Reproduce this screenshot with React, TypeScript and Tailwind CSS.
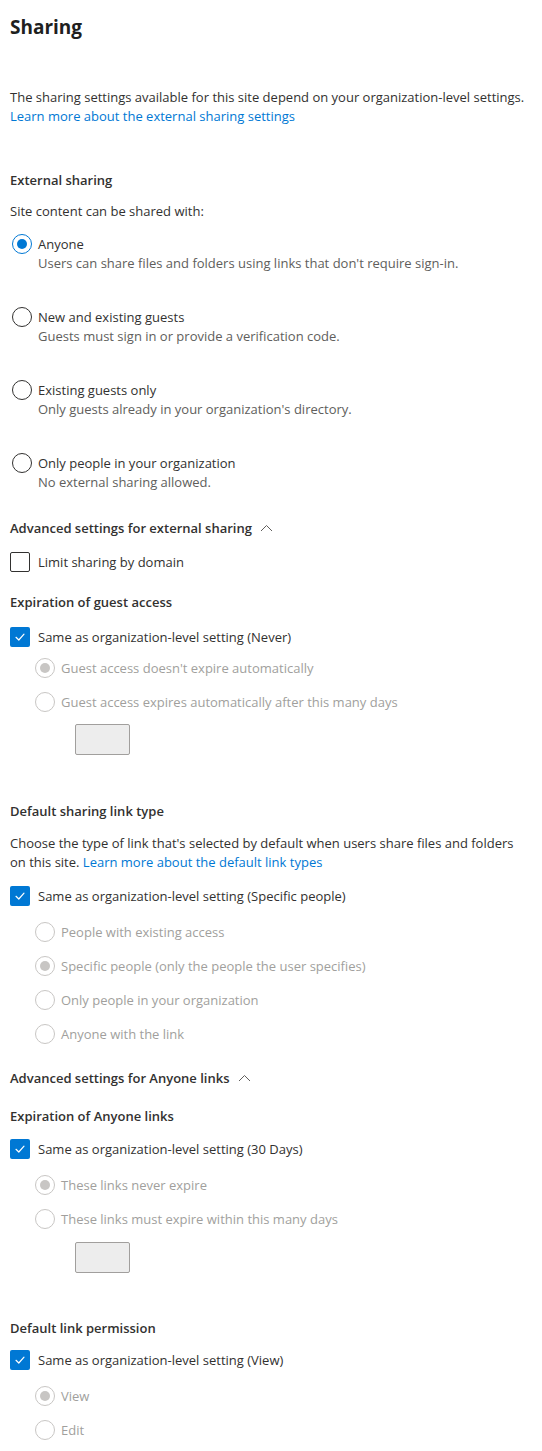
import React from "react";

const font = { fontFamily: '"Open Sans", "Noto Sans", sans-serif' };

function Radio({ state }: { state: "on" | "off" | "don" | "doff" }) {
  if (state === "on")
    return (
      <span className="w-[20px] h-[20px] shrink-0 rounded-full border border-[#0078d4] flex items-center justify-center">
        <span className="w-[10px] h-[10px] rounded-full bg-[#0078d4]" />
      </span>
    );
  if (state === "off")
    return <span className="w-[20px] h-[20px] shrink-0 rounded-full border border-[#323130]" />;
  if (state === "don")
    return (
      <span className="w-[20px] h-[20px] shrink-0 rounded-full border border-[#c8c6c4] flex items-center justify-center">
        <span className="w-[10px] h-[10px] rounded-full bg-[#c8c6c4]" />
      </span>
    );
  return <span className="w-[20px] h-[20px] shrink-0 rounded-full border border-[#c8c6c4]" />;
}

function Check({ checked }: { checked: boolean }) {
  if (checked)
    return (
      <span className="w-[20px] h-[20px] shrink-0 rounded-[2px] bg-[#0078d4] flex items-center justify-center">
        <svg width="12" height="12" viewBox="0 0 12 12" fill="none">
          <path d="M2 6.3 L4.8 9 L10 3.2" stroke="white" strokeWidth="1.2" strokeLinecap="round" strokeLinejoin="round" />
        </svg>
      </span>
    );
  return <span className="w-[20px] h-[20px] shrink-0 rounded-[2px] border border-[#323130]" />;
}

function Chevron() {
  return (
    <svg width="13" height="8" viewBox="0 0 13 8" fill="none" className="ml-[8px]">
      <path d="M1 7 L6.5 1.5 L12 7" stroke="#605e5c" strokeWidth="1" />
    </svg>
  );
}

function MainRadio({ state, label, desc, className }: { state: "on" | "off"; label: string; desc: string; className: string }) {
  return (
    <div className={`flex flex-col ${className}`}>
      <div className="flex items-center h-[20px] pl-[12px]">
        <Radio state={state} />
        <span className="ml-[6px] leading-[20px] text-[#323130]">{label}</span>
      </div>
      <div className="pl-[38px] leading-[19px] text-[#605e5c]">{desc}</div>
    </div>
  );
}

function CheckRow({ checked, label, className }: { checked: boolean; label: string; className: string }) {
  return (
    <div className={`flex items-center h-[20px] pl-[10px] ${className}`}>
      <Check checked={checked} />
      <span className="ml-[8px] leading-[20px] text-[#323130]">{label}</span>
    </div>
  );
}

function SubRadio({ on, label, className }: { on: boolean; label: string; className: string }) {
  return (
    <div className={`flex items-center h-[20px] pl-[35px] ${className}`}>
      <Radio state={on ? "don" : "doff"} />
      <span className="ml-[6px] leading-[20px] text-[#a19f9d]">{label}</span>
    </div>
  );
}

function DisabledInput({ className }: { className: string }) {
  return <div className={`ml-[75px] w-[55px] h-[31px] rounded-[2px] border border-[#a19f9d] bg-[#ededed] ${className}`} />;
}

export default function App() {
  return (
    <div style={font} className="w-[542px] h-[1451px] bg-white text-[13px] text-[#323130] flex flex-col overflow-hidden">
      <div className="ml-[10px] mt-[13px] h-[28px] leading-[28px] text-[19px] font-bold text-[#201f1e]">Sharing</div>

      <div className="ml-[10px] mt-[47px] leading-[19px] text-[#323130]">
        <div>The sharing settings available for this site depend on your organization-level settings.</div>
        <div className="text-[#0078d4]">Learn more about the external sharing settings</div>
      </div>

      <div className="ml-[10px] mt-[44px] h-[20px] leading-[20px] font-semibold">External sharing</div>
      <div className="ml-[10px] mt-[12px] leading-[19px]">Site content can be shared with:</div>

      <MainRadio className="mt-[13px]" state="on" label="Anyone" desc="Users can share files and folders using links that don't require sign-in." />
      <MainRadio className="mt-[34px]" state="off" label="New and existing guests" desc="Guests must sign in or provide a verification code." />
      <MainRadio className="mt-[34px]" state="off" label="Existing guests only" desc="Only guests already in your organization's directory." />
      <MainRadio className="mt-[34px]" state="off" label="Only people in your organization" desc="No external sharing allowed." />

      <div className="ml-[10px] mt-[26px] h-[20px] flex items-center font-semibold">
        <span className="leading-[20px]">Advanced settings for external sharing</span>
        <Chevron />
      </div>

      <CheckRow className="mt-[14px]" checked={false} label="Limit sharing by domain" />

      <div className="ml-[10px] mt-[20px] h-[20px] leading-[20px] font-semibold">Expiration of guest access</div>
      <CheckRow className="mt-[15px]" checked label="Same as organization-level setting (Never)" />
      <SubRadio className="mt-[11px]" on label="Guest access doesn't expire automatically" />
      <SubRadio className="mt-[14px]" on={false} label="Guest access expires automatically after this many days" />
      <DisabledInput className="mt-[12px]" />

      <div className="ml-[10px] mt-[46px] h-[20px] leading-[20px] font-semibold">Default sharing link type</div>
      <div className="ml-[10px] mr-[10px] mt-[13px] leading-[19px]">
        <div>Choose the type of link that's selected by default when users share files and folders</div>
        <div>
          on this site. <span className="text-[#0078d4]">Learn more about the default link types</span>
        </div>
      </div>
      <CheckRow className="mt-[14px]" checked label="Same as organization-level setting (Specific people)" />
      <SubRadio className="mt-[16px]" on={false} label="People with existing access" />
      <SubRadio className="mt-[14px]" on label="Specific people (only the people the user specifies)" />
      <SubRadio className="mt-[14px]" on={false} label="Only people in your organization" />
      <SubRadio className="mt-[14px]" on={false} label="Anyone with the link" />

      <div className="ml-[10px] mt-[24px] h-[20px] flex items-center font-semibold">
        <span className="leading-[20px]">Advanced settings for Anyone links</span>
        <Chevron />
      </div>

      <div className="ml-[10px] mt-[18px] h-[20px] leading-[20px] font-semibold">Expiration of Anyone links</div>
      <CheckRow className="mt-[13px]" checked label="Same as organization-level setting (30 Days)" />
      <SubRadio className="mt-[16px]" on label="These links never expire" />
      <SubRadio className="mt-[14px]" on={false} label="These links must expire within this many days" />
      <DisabledInput className="mt-[13px]" />

      <div className="ml-[10px] mt-[45px] h-[20px] leading-[20px] font-semibold">Default link permission</div>
      <CheckRow className="mt-[12px]" checked label="Same as organization-level setting (View)" />
      <SubRadio className="mt-[16px]" on label="View" />
      <SubRadio className="mt-[14px]" on={false} label="Edit" />
    </div>
  );
}
